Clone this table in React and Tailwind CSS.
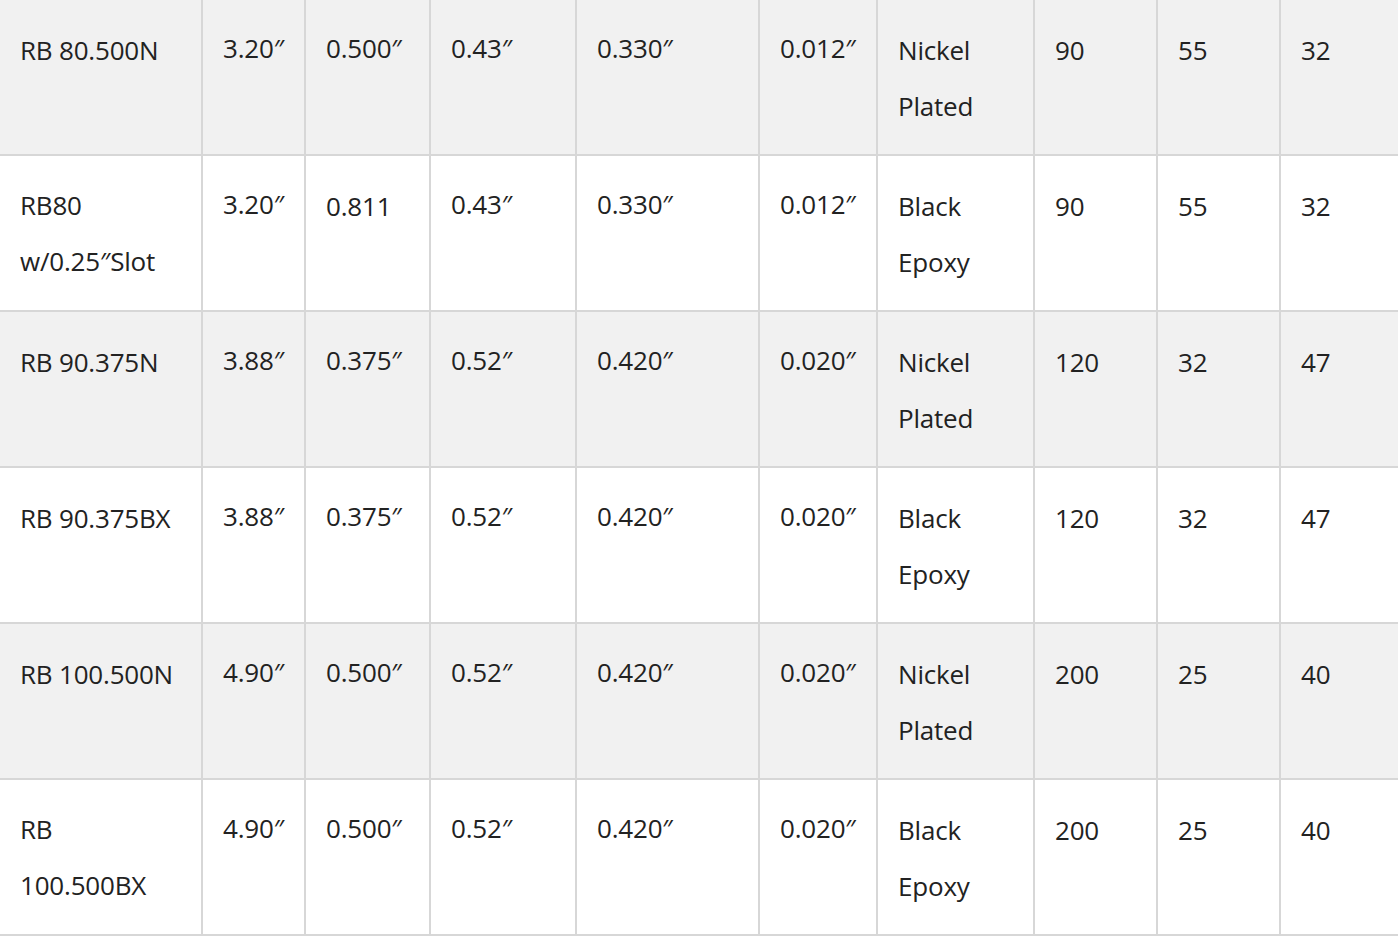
import React from 'react';

const rows = [
  [['RB 80.500N'], '3.20″', '0.500″', '0.43″', '0.330″', '0.012″', ['Nickel', 'Plated'], '90', '55', '32'],
  [['RB80', 'w/0.25″Slot'], '3.20″', '0.811', '0.43″', '0.330″', '0.012″', ['Black', 'Epoxy'], '90', '55', '32'],
  [['RB 90.375N'], '3.88″', '0.375″', '0.52″', '0.420″', '0.020″', ['Nickel', 'Plated'], '120', '32', '47'],
  [['RB 90.375BX'], '3.88″', '0.375″', '0.52″', '0.420″', '0.020″', ['Black', 'Epoxy'], '120', '32', '47'],
  [['RB 100.500N'], '4.90″', '0.500″', '0.52″', '0.420″', '0.020″', ['Nickel', 'Plated'], '200', '25', '40'],
  [['RB', '100.500BX'], '4.90″', '0.500″', '0.52″', '0.420″', '0.020″', ['Black', 'Epoxy'], '200', '25', '40'],
];

const Cell = ({ value, col, last }) => {
  const lines = Array.isArray(value) ? value : [value];
  const prime = !Array.isArray(value) && value.includes('″');
  return (
    <div
      className={`h-[156px] border-b-2 border-[#d7d7d7] pr-[12px] ${last ? '' : 'border-r-2'} ${col === 0 ? 'pl-[20px]' : 'pl-[20px]'} ${prime ? 'pt-[20px]' : col === 0 && lines.length > 1 ? 'pt-[21px]' : 'pt-[22px]'}`}
    >
      {lines.map((l, i) => (
        <div key={i} className="whitespace-nowrap">{l}</div>
      ))}
    </div>
  );
};

export default function App() {
  return (
    <div
      className="w-[1398px] min-h-[938px] bg-white text-[26px] leading-[56px] text-[#222222] tracking-[-0.2px] overflow-hidden"
      style={{ fontFamily: '"Open Sans", "Noto Sans", sans-serif' }}
    >
      <div className="grid grid-cols-[203px_103px_125px_146px_183px_118px_157px_123px_123px_117px]">
        {rows.map((row, r) => (
          <div key={r} className="contents">
            {row.map((v, c) => (
              <div key={c} className={r % 2 === 0 ? 'bg-[#f1f1f1]' : 'bg-white'}>
                <Cell value={v} col={c} last={c === row.length - 1} />
              </div>
            ))}
          </div>
        ))}
      </div>
    </div>
  );
}
